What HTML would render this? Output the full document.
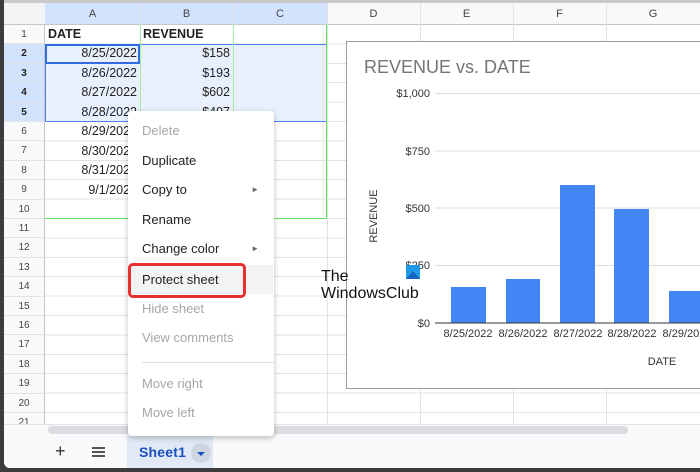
<!DOCTYPE html>
<html><head><meta charset="utf-8"><style>
*{margin:0;padding:0;box-sizing:border-box}
body{width:700px;height:472px;overflow:hidden;background:#3c3c3c;font-family:"Liberation Sans",Arial,sans-serif;position:relative}
.win{position:absolute;left:4px;top:0;width:696px;height:468px;background:#fff;border-bottom-left-radius:6px;overflow:hidden}
.a{position:absolute}
.grid{position:absolute;left:41px;top:25px;width:660px;height:400px;
background-image:repeating-linear-gradient(to bottom,transparent 0,transparent 18.4px,#e2e3e3 18.4px,#e2e3e3 19.4px);}
.vl{position:absolute;top:3px;width:1px;height:422px;background:#e2e3e3}
.ch{position:absolute;top:3px;height:22px;background:#f8f9fa;border-bottom:1px solid #c4c7c5;font-size:11px;color:#444;text-align:center;line-height:22px}
.rh{position:absolute;left:0;width:41px;height:19.4px;background:#f8f9fa;border-bottom:1px solid #e2e3e3;border-right:1px solid #c4c7c5;font-size:10px;color:#444;text-align:center;line-height:19px}
.sel{background:#d3e3fd;color:#222;font-weight:bold}
.c{position:absolute;font-size:12.5px;color:#222;height:19px;line-height:19px}
.r{text-align:right}
.mi{position:absolute;left:0;width:145px;height:29px;line-height:29px;padding-left:14px;font-size:13px;color:#222}
.dis{color:#a4a7ab}
.arr{position:absolute;right:14px;font-size:8px;color:#666}
</style></head><body>
<div class="win">
<div class="a" style="left:0;top:0;width:696px;height:3px;background:#c9c9c9"></div>
<div class="grid"></div>
<div class="ch" style="left:0;width:41px;background:#f1f3f4"></div>
<div class="ch" style="left:41px;width:95px;background:#d3e3fd">A</div>
<div class="ch" style="left:136px;width:93px;background:#d3e3fd">B</div>
<div class="ch" style="left:229px;width:94px;background:#d3e3fd">C</div>
<div class="ch" style="left:323px;width:93px">D</div>
<div class="ch" style="left:416px;width:93px">E</div>
<div class="ch" style="left:509px;width:93px">F</div>
<div class="ch" style="left:602px;width:94px">G</div>
<div class="vl" style="left:136px"></div><div class="vl" style="left:229px"></div><div class="vl" style="left:323px"></div><div class="vl" style="left:416px"></div><div class="vl" style="left:509px"></div><div class="vl" style="left:602px"></div>
<div class="a" style="left:41px;top:44px;width:282px;height:78px;background:#e8f0fe;border:1px solid #4a80f0"></div>
<div class="a" style="left:41px;top:44px;width:95px;height:20px;border:2px solid #2f6de0;background:#e8f0fe"></div>
<div class="a" style="left:322px;top:25px;width:1px;height:194px;background:#5fe35f"></div>
<div class="a" style="left:41px;top:218px;width:282px;height:1px;background:#5fe35f"></div>
<div class="a" style="left:136px;top:25px;width:1px;height:194px;background:#9ef09e"></div>
<div class="a" style="left:229px;top:25px;width:1px;height:194px;background:#9ef09e"></div>
<div class="rh" style="top:25px">1</div>
<div class="rh sel" style="top:44.4px">2</div>
<div class="rh sel" style="top:63.8px">3</div>
<div class="rh sel" style="top:83.2px">4</div>
<div class="rh sel" style="top:102.6px">5</div>
<div class="rh" style="top:122px">6</div>
<div class="rh" style="top:141.4px">7</div>
<div class="rh" style="top:160.8px">8</div>
<div class="rh" style="top:180.2px">9</div>
<div class="rh" style="top:199.6px">10</div>
<div class="rh" style="top:219px">11</div>
<div class="rh" style="top:238.4px">12</div>
<div class="rh" style="top:257.8px">13</div>
<div class="rh" style="top:277.2px">14</div>
<div class="rh" style="top:296.6px">15</div>
<div class="rh" style="top:316px">16</div>
<div class="rh" style="top:335.4px">17</div>
<div class="rh" style="top:354.8px">18</div>
<div class="rh" style="top:374.2px">19</div>
<div class="rh" style="top:393.6px">20</div>
<div class="rh" style="top:413px;height:12px;overflow:hidden">21</div>
<div class="c" style="left:44px;top:25px;font-weight:bold">DATE</div>
<div class="c" style="left:139px;top:25px;font-weight:bold">REVENUE</div>
<div class="c r" style="left:41px;width:92px;top:44px">8/25/2022</div>
<div class="c r" style="left:41px;width:92px;top:63.5px">8/26/2022</div>
<div class="c r" style="left:41px;width:92px;top:83px">8/27/2022</div>
<div class="c r" style="left:41px;width:92px;top:102.5px">8/28/2022</div>
<div class="c r" style="left:41px;width:92px;top:122px">8/29/2022</div>
<div class="c r" style="left:41px;width:92px;top:141.5px">8/30/2022</div>
<div class="c r" style="left:41px;width:92px;top:161px">8/31/2022</div>
<div class="c r" style="left:41px;width:92px;top:180.5px">9/1/2022</div>
<div class="c r" style="left:136px;width:90px;top:44px">$158</div>
<div class="c r" style="left:136px;width:90px;top:63.5px">$193</div>
<div class="c r" style="left:136px;width:90px;top:83px">$602</div>
<div class="c r" style="left:136px;width:90px;top:102.5px">$497</div>
<div class="a" style="left:342px;top:41px;width:360px;height:348px;background:#fff;border:1px solid #9e9e9e"></div>
<div class="a" style="left:360px;top:57px;font-size:18px;color:#757575">REVENUE vs. DATE</div>
<svg class="a" style="left:342px;top:41px" width="360" height="348">
<g stroke="#ddd" stroke-width="1"><line x1="89" x2="360" y1="52.5" y2="52.5"/><line x1="89" x2="360" y1="110" y2="110"/><line x1="89" x2="360" y1="167" y2="167"/><line x1="89" x2="360" y1="224.5" y2="224.5"/></g>
<g fill="#4285f4"><rect x="105" y="246" width="35" height="36"/><rect x="160" y="238" width="34" height="44"/><rect x="214" y="144" width="35" height="138"/><rect x="268" y="168" width="35" height="114"/><rect x="323" y="250" width="40" height="32"/></g>
<line x1="89" x2="360" y1="282" y2="282" stroke="#333"/>
<g font-size="11" fill="#333" text-anchor="end" font-family="Liberation Sans"><text x="84" y="56">$1,000</text><text x="84" y="114">$750</text><text x="84" y="171">$500</text><text x="84" y="228">$250</text><text x="84" y="286">$0</text></g>
<g font-size="11" fill="#333" text-anchor="middle" font-family="Liberation Sans"><text x="122" y="296">8/25/2022</text><text x="177" y="296">8/26/2022</text><text x="232" y="296">8/27/2022</text><text x="286" y="296">8/28/2022</text><text x="341" y="296">8/29/2022</text><text x="316" y="324">DATE</text></g>
<text transform="translate(31,175) rotate(-90)" text-anchor="middle" font-size="11" fill="#333" font-family="Liberation Sans">REVENUE</text>
</svg>
<div class="a" style="left:317px;top:268px;font-size:16px;line-height:17px;color:#111">The<br>WindowsClub</div>
<svg class="a" style="left:402px;top:265px" width="14" height="14"><rect width="14" height="14" fill="#1e9be8"/><path d="M0 14L7 6 14 14Z" fill="#1565c0"/></svg>
<div class="a" style="left:0;top:424px;width:696px;height:12px;background:#f8f9fa;border-top:1px solid #e2e3e3"></div>
<div class="a" style="left:44px;top:426px;width:580px;height:8px;border-radius:4px;background:#dadce0"></div>
<div class="a" style="left:0;top:436px;width:696px;height:32px;background:#f8f9fa"></div>
<div class="a" style="left:51px;top:441px;font-size:18px;color:#333">+</div>
<div class="a" style="left:88px;top:447px;width:13px;height:2px;background:#555;box-shadow:0 4px 0 #555,0 8px 0 #555"></div>
<div class="a" style="left:123px;top:436px;width:86px;height:32px;background:#e1e9f7"></div>
<div class="a" style="left:135px;top:444px;font-size:14px;color:#1a4fc0;font-weight:bold;letter-spacing:0.2px">Sheet1</div>
<div class="a" style="left:187px;top:443px;width:20px;height:20px;border-radius:50%;background:#cfd6e2"></div>
<div class="a" style="left:193px;top:452px;width:0;height:0;border-left:4px solid transparent;border-right:4px solid transparent;border-top:4px solid #1a4fc0"></div>
<div class="a" style="left:124px;top:111px;width:146px;height:325px;background:#fff;border-radius:4px;box-shadow:0 2px 6px rgba(0,0,0,.25)">
<div class="mi dis" style="top:5px">Delete</div>
<div class="mi" style="top:35px">Duplicate</div>
<div class="mi" style="top:64px">Copy to<span class="arr">►</span></div>
<div class="mi" style="top:94px">Rename</div>
<div class="mi" style="top:123px">Change color<span class="arr">►</span></div>
<div class="mi" style="top:154px;background:#f1f3f4">Protect sheet</div>
<div class="a" style="left:0;top:152px;width:118px;height:35px;border:3px solid #e8312f;border-radius:5px"></div>
<div class="mi dis" style="top:183px">Hide sheet</div>
<div class="mi dis" style="top:212px">View comments</div>
<div class="a" style="left:14px;top:251px;width:132px;height:1px;background:#dadce0"></div>
<div class="mi dis" style="top:258px">Move right</div>
<div class="mi dis" style="top:287px">Move left</div>
</div>
</div>
</body></html>
